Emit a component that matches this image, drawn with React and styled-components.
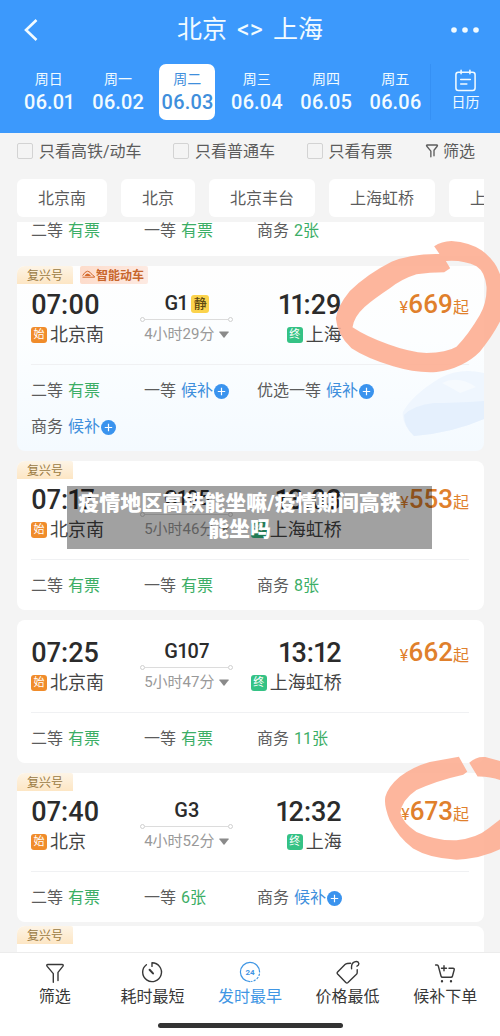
import React, { useState } from 'react';
import styled, { createGlobalStyle, css } from 'styled-components';

const GlobalStyle = createGlobalStyle`
  * {
    box-sizing: border-box;
  }

  body {
    margin: 0;
    background: #f4f4f4;
    color: #333;
    font-family: Roboto, 'Noto Sans CJK SC', sans-serif;
  }

  button {
    margin: 0;
    padding: 0;
    border: 0;
    background: none;
    color: inherit;
    font: inherit;
    cursor: pointer;
  }
`;

const Page = styled.div`
  display: flex;
  flex-direction: column;
  height: 100vh;
`;

/* header */

const Header = styled.header`
  padding-bottom: 13px;
  background: #3c99fc;
  color: #f2fbff;
`;

const TitleBar = styled.div`
  display: flex;
  align-items: center;
  justify-content: space-between;
  height: 60px;
  margin-bottom: 4px;
  padding: 0 18px;
`;

const Title = styled.h1`
  display: flex;
  gap: 10px;
  margin: 0;
  font-size: 25px;
  font-weight: 400;
  line-height: 32px;
`;

const IconButton = styled.button`
  display: flex;
  align-items: center;
  width: 34px;
`;

const DateRow = styled.div`
  display: flex;
  padding-left: 14px;
`;

const Dates = styled.div`
  flex: 1;
  display: grid;
  grid-template-columns: repeat(6, 1fr);
  justify-items: center;
  border-right: 1px solid #3590f4;
`;

const DateButton = styled.button`
  display: flex;
  flex-direction: column;
  align-items: center;
  width: 56px;
  height: 56px;
  padding-top: 6px;
  border-radius: 7px;
  font-size: 14px;
  line-height: 18px;
  ${(props) => props.$active && css`
    background: #fff;
    color: #3f8fdc;
  `}
`;

const DateNumber = styled.span`
  font-size: 20px;
  font-weight: 500;
  line-height: 28px;
  font-variant-numeric: proportional-nums;
`;

const CalendarButton = styled.button`
  display: flex;
  flex-direction: column;
  align-items: center;
  gap: 1px;
  width: 69px;
  padding-top: 5px;
  font-size: 14px;
  line-height: 18px;
`;

/* filters */

const FilterRow = styled.div`
  display: flex;
  align-items: center;
  justify-content: space-between;
  height: 36px;
  padding: 0 25px 2px 17px;
  color: #5c5c5c;
  font-size: 16px;
`;

const CheckLabel = styled.label`
  display: flex;
  align-items: center;
  gap: 6px;
`;

const Check = styled.input`
  appearance: none;
  width: 16px;
  height: 16px;
  margin: 2px 0 0;
  border: 1px solid #d3d3d3;
  border-radius: 2px;

  &:checked {
    background: #3c99fc;
  }
`;

const FilterButton = styled.button`
  display: flex;
  align-items: center;
  gap: 3px;
`;

const Chips = styled.div`
  display: flex;
  flex-shrink: 0;
  gap: 14px;
  margin: 10px 16px 5px 17px;
  overflow: hidden;
`;

const Chip = styled.button`
  flex: none;
  height: 38px;
  padding: 0 21px 2px;
  border-radius: 6px;
  background: #fff;
  color: #5c5c5c;
  font-size: 16px;
`;

/* train list */

const List = styled.main`
  flex: 1;
  min-height: 0;
  padding: 0 16px 0 17px;
  overflow-x: hidden;
  overflow-y: auto;
  scrollbar-width: none;
`;

const Card = styled.article`
  position: relative;
  margin-bottom: ${(props) => (props.$tight ? '4px' : '10px')};
  padding: ${(props) => (props.$tagged || props.$cut ? '0' : '17px')} 15px 0 14px;
  border-radius: ${(props) => (props.$cut ? '0' : '8px')};
  background: ${(props) => (props.$smart ? 'linear-gradient(#fefefe, #fcfeff 40%, #f4faff)' : '#fff')};
`;

const LastCard = styled(Card)`
  min-height: 60px;
`;

const Tags = styled.div`
  display: flex;
  gap: 7px;
  height: 18px;
  margin: 0 0 5px -14px;
`;

const Tag = styled.span`
  display: flex;
  align-items: center;
  gap: 1px;
  height: 18px;
  padding: 0 10px 2px;
  border-radius: 8px 2px 0 0;
  background: linear-gradient(#fdf4e6, #fde6c4);
  color: #9a7a42;
  font-size: 12px;
  ${(props) => props.$smart && css`
    padding: 0 4px 2px 2px;
    border-radius: 2px;
    background: linear-gradient(90deg, #fddccb, #fdeae2);
    color: #c8662c;
    font-weight: 700;
  `}
`;

const Trip = styled.div`
  display: grid;
  grid-template-columns: 109fr 93fr 108fr 127fr;
`;

const Stop = styled.div`
  display: flex;
  flex-direction: column;
  align-items: ${(props) => (props.$end ? 'flex-end' : 'flex-start')};
`;

const Time = styled.span`
  color: #2b2b2b;
  font-size: 27px;
  font-weight: 500;
  line-height: 32px;
  font-variant-numeric: proportional-nums;
`;

const Station = styled.span`
  display: flex;
  align-items: center;
  gap: 3px;
  color: #444;
  font-size: 18px;
  line-height: 28px;
  white-space: nowrap;
`;

const StopBadge = styled.span`
  width: 16px;
  height: 16px;
  border-radius: 3px;
  background: ${(props) => (props.$end ? '#35c285' : '#f08c2b')};
  color: #fff;
  font-size: 11px;
  line-height: 16px;
  text-align: center;
`;

const Middle = styled.div`
  display: flex;
  flex-direction: column;
  align-items: center;
`;

const TrainNo = styled.span`
  display: flex;
  align-items: center;
  gap: 4px;
  color: #2b2b2b;
  font-size: 20px;
  font-weight: 500;
  line-height: 29px;
  font-variant-numeric: proportional-nums;
`;

const Quiet = styled.span`
  width: 18px;
  height: 18px;
  border-radius: 3px;
  background: #fbd34c;
  color: #5e4a12;
  font-size: 13px;
  line-height: 18px;
  text-align: center;
`;

const Track = styled.span`
  display: flex;
  align-items: center;
  width: 100%;
  height: 3px;

  &::before,
  &::after {
    content: '';
    width: 3px;
    height: 3px;
    border: 1px solid #d0d0d0;
    border-radius: 50%;
  }
`;

const TrackLine = styled.span`
  flex: 1;
  height: 1px;
  background: #dcdcdc;
`;

const Duration = styled.button`
  display: flex;
  align-items: center;
  gap: 5px;
  color: #999;
  font-size: 15px;
  line-height: 26px;
  white-space: nowrap;
`;

const Price = styled.span`
  color: #e0802c;
  font-size: 16px;
  line-height: 30px;
  text-align: right;
  white-space: nowrap;
`;

const Amount = styled.span`
  font-size: 26px;
  font-weight: 500;
  font-variant-numeric: proportional-nums;
`;

const Seats = styled.div`
  position: relative;
  display: grid;
  grid-template-columns: 113fr 113fr 212fr;
  row-gap: 18px;
  margin-top: ${(props) => (props.$cut ? '0' : '15px')};
  padding: ${(props) => (props.$cut ? '0' : '17px')} 0 ${(props) => (props.$cut ? '16px' : '15px')};
  border-top: ${(props) => (props.$cut ? '0' : '1px solid #f0f1f3')};
  font-size: 16px;
  line-height: 18px;
  white-space: nowrap;
`;

const Seat = styled.span`
  display: flex;
  align-items: center;
  gap: 5px;
  color: #5c5c5c;
`;

const Available = styled.span`
  color: #3cae66;
`;

const Waitlist = styled.button`
  display: flex;
  align-items: center;
  gap: 1px;
  color: #3f8fdc;
`;

const PenMark = styled.svg`
  position: absolute;
  top: ${(props) => props.$top};
  right: -16px;
  z-index: 1;
  fill: #fdac90;
  fill-opacity: 0.88;
  pointer-events: none;
`;

const TrainArt = styled.svg`
  position: absolute;
  right: 0;
  bottom: 14px;
`;

const Caption = styled.p`
  position: absolute;
  top: 25px;
  left: 50px;
  right: 52px;
  z-index: 2;
  margin: 0;
  padding: 4px 27px 7px 7px;
  background: rgba(0, 0, 0, 0.37);
  color: #fff;
  font-size: 21px;
  font-weight: 900;
  line-height: 26px;
  text-align: center;
`;

/* bottom bar */

const BottomBar = styled.footer`
  position: relative;
  z-index: 3;
  flex-shrink: 0;
  padding-bottom: 8px;
  border-top: 1px solid #ececec;
  background: #fff;
`;

const Tabs = styled.nav`
  display: grid;
  grid-template-columns: repeat(5, 1fr);
  padding: 7px 6px 0;
`;

const TabButton = styled.button`
  display: flex;
  flex-direction: column;
  align-items: center;
  color: ${(props) => (props.$active ? '#3f96e4' : '#383838')};
  font-size: 16px;
  line-height: 26px;
`;

const HomeBar = styled.div`
  width: 37%;
  height: 5px;
  margin: 13px auto 0;
  border-radius: 3px;
  background: #333;
`;

const LineIcon = ({ size = 24, width = 1.4, children }) => (
  <svg
    width={size}
    height={size}
    viewBox="0 0 24 24"
    fill="none"
    stroke="currentColor"
    strokeWidth={width}
    strokeLinecap="round"
    strokeLinejoin="round"
    aria-hidden="true"
  >
    {children}
  </svg>
);

const FunnelIcon = ({ size, width }) => (
  <LineIcon size={size} width={width}>
    <path d="M10.3 22.3V13.6L4.2 6.4Q3 4.5 5 4.5H19Q21 4.5 19.8 6.4L15 12.4V20.6" />
  </LineIcon>
);

const TimerIcon = () => (
  <LineIcon>
    <path d="M12 6.4V2.8A9.4 9.4 0 1 1 6.4 4.7" />
    <path d="M9.6 9.8L13 13.4" strokeWidth="2" />
  </LineIcon>
);

const DayIcon = () => (
  <LineIcon width={1.2}>
    <path d="M12 21.6A9.6 9.6 0 1 1 21.6 12" />
    <path d="M21.4 14.2A9.6 9.6 0 0 1 13.6 21.5" strokeDasharray="1.4 2.2" />
    <text x="12" y="15" textAnchor="middle" fontSize="8" fontWeight="700" fill="currentColor" stroke="none">24</text>
  </LineIcon>
);

const PriceTagIcon = () => (
  <LineIcon>
    <path d="M14.6 3.2L11.2 3.5Q10 3.6 9 4.6L1.6 12Q.7 13 1.6 14L9.8 22.4Q10.9 23.4 12 22.4L20.2 14.6Q21.2 13.6 21.2 12.4V9.6" />
    <path d="M15.6 8.8Q15 3 18.6 1.8Q22 .8 22.8 3.4Q23 5.4 21 6.2" />
  </LineIcon>
);

const CartIcon = () => (
  <LineIcon>
    <path d="M2.6 5H4.2Q5 5 5.3 6L8 16Q8.3 17.3 9.6 17.3H18Q19.2 17.3 19.5 16L21.2 9.8Q21.6 8.2 20 8.2H16" />
    <path d="M11 5.8V10.8M8.5 8.3H13.5" />
    <path d="M9 21.2V21.3M18 21.2V21.3" strokeWidth="2.4" />
  </LineIcon>
);

const PlusIcon = () => (
  <svg width="15" height="15" viewBox="0 0 15 15" aria-hidden="true">
    <circle cx="7.5" cy="7.5" r="7.5" fill="#3a93ee" />
    <path d="M7.5 3.8V11.2M3.8 7.5H11.2" stroke="#fff" strokeWidth="1.2" />
  </svg>
);

const SmartIcon = () => (
  <svg width="13" height="8" viewBox="0 0 13 8" fill="none" stroke="#d4692a" aria-hidden="true">
    <path d="M.5 7.2H12.6Q12.6 6 10.6 5.2Q8 1.4 5.6 1.2Q3 1.4.6 5.6" />
    <path d="M2.6 6Q3.6 3.4 5.6 3.4Q7.6 3.6 9 6Z" fill="#d4692a" stroke="none" />
  </svg>
);

const trains = [
  {
    no: 'G1', quiet: true, smart: true, tagged: true, mark: 'wide',
    depart: '07:00', from: '北京南', arrive: '11:29', to: '上海', duration: '4小时29分', price: 669,
    seats: [['二等', '有票'], ['一等', '候补'], ['优选一等', '候补'], ['商务', '候补']],
  },
  {
    no: 'G105', tagged: true, caption: '疫情地区高铁能坐嘛/疫情期间高铁能坐吗',
    depart: '07:17', from: '北京南', arrive: '13:03', to: '上海虹桥', duration: '5小时46分', price: 553,
    seats: [['二等', '有票'], ['一等', '有票'], ['商务', '8张']],
  },
  {
    no: 'G107',
    depart: '07:25', from: '北京南', arrive: '13:12', to: '上海虹桥', duration: '5小时47分', price: 662,
    seats: [['二等', '有票'], ['一等', '有票'], ['商务', '11张']],
  },
  {
    no: 'G3', tagged: true, tight: true, mark: 'small',
    depart: '07:40', from: '北京', arrive: '12:32', to: '上海', duration: '4小时52分', price: 673,
    seats: [['二等', '有票'], ['一等', '6张'], ['商务', '候补']],
  },
];

const days = [
  ['周日', '06.01'],
  ['周一', '06.02'],
  ['周二', '06.03'],
  ['周三', '06.04'],
  ['周四', '06.05'],
  ['周五', '06.06'],
];

const stations = ['北京南', '北京', '北京丰台', '上海虹桥', '上海'];

const tabs = [
  ['筛选', FunnelIcon],
  ['耗时最短', TimerIcon],
  ['发时最早', DayIcon],
  ['价格最低', PriceTagIcon],
  ['候补下单', CartIcon],
];

const SeatList = ({ seats, cut }) => (
  <Seats $cut={cut}>
    {seats.map(([name, state]) => (
      <Seat key={name}>
        {name}
        {state === '候补' ? (
          <Waitlist type="button">{state}<PlusIcon /></Waitlist>
        ) : (
          <Available>{state}</Available>
        )}
      </Seat>
    ))}
  </Seats>
);

const WideMark = () => (
  <PenMark $top="-31px" width="167" height="140" viewBox="250 0 500 420" fillRule="evenodd" aria-hidden="true">
    <path d="M553 34Q575 19 605 18Q660 22 695 46Q735 75 748 112L760 140V240Q735 295 690 350Q640 400 560 411Q500 415 430 394Q350 370 305 340Q262 300 258 250Q262 215 300 168Q350 118 425 80Q490 55 569 57Z
      M588 78L601 100L583 112Q540 112 500 118Q455 132 420 160Q375 190 345 215Q312 245 308 277Q350 305 415 328Q480 352 530 354Q590 353 620 335Q655 300 690 240Q712 200 710 155Q705 110 680 94Q640 74 588 78Z" />
  </PenMark>
);

const SmallMark = () => (
  <PenMark $top="-23px" width="117" height="112" viewBox="400 0 350 335" aria-hidden="true">
    <path d="M627 20L652 65L640 74Q560 92 500 120Q456 150 452 188Q460 220 500 245Q560 272 620 270Q680 264 715 235L760 200V292Q700 325 620 328Q540 325 490 295Q445 260 420 210Q402 165 407 140Q415 110 450 80Q490 50 540 36Z" />
    <path d="M658 38Q680 18 706 21L760 36V94Q725 78 683 79Z" />
  </PenMark>
);

const TrainCard = ({ train }) => (
  <Card $tagged={train.tagged} $smart={train.smart} $tight={train.tight}>
    {train.smart && (
      <TrainArt width="82" height="68" viewBox="0 0 82 68" aria-hidden="true">
        <path d="M82 4Q58-2 38 9Q10 26 1 43Q-1 54 12 67Q50 64 82 50Z" fill="#eff6fe" />
        <path d="M82 32Q50 34 32 34Q12 36 2 46Q2 58 12 67Q50 64 82 50Z" fill="#e5f0fd" />
        <path d="M40 14Q56 6 74 18L58 24Q48 18 40 14Z" fill="#f6fafe" />
      </TrainArt>
    )}
    {train.tagged && (
      <Tags>
        <Tag>复兴号</Tag>
        {train.smart && <Tag $smart><SmartIcon />智能动车</Tag>}
      </Tags>
    )}
    <Trip>
      <Stop>
        <Time>{train.depart}</Time>
        <Station><StopBadge>始</StopBadge>{train.from}</Station>
      </Stop>
      <Middle>
        <TrainNo>{train.no}{train.quiet && <Quiet>静</Quiet>}</TrainNo>
        <Track><TrackLine /></Track>
        <Duration type="button">
          {train.duration}
          <svg width="10" height="7" viewBox="0 0 10 7" aria-hidden="true">
            <path d="M.6.4H9.4Q10 .6 9.6 1.2L5.5 6.4Q5 7 4.5 6.4L.4 1.2Q0 .6.6.4Z" fill="#8a8a8a" />
          </svg>
        </Duration>
      </Middle>
      <Stop $end>
        <Time>{train.arrive}</Time>
        <Station><StopBadge $end>终</StopBadge>{train.to}</Station>
      </Stop>
      <Price>¥<Amount>{train.price}</Amount>起</Price>
    </Trip>
    <SeatList seats={train.seats} />
    {train.mark === 'wide' && <WideMark />}
    {train.mark === 'small' && <SmallMark />}
    {train.caption && <Caption>{train.caption}</Caption>}
  </Card>
);

const App = () => {
  const [day, setDay] = useState('06.03');
  const [tab, setTab] = useState('发时最早');

  return (
    <Page>
      <GlobalStyle />
      <Header>
        <TitleBar>
          <IconButton type="button" aria-label="返回">
            <svg width="22" height="24" viewBox="0 0 22 24" fill="none" stroke="currentColor" strokeWidth="2.6" aria-hidden="true">
              <path d="M18.5 2L8 12L18.5 22" />
            </svg>
          </IconButton>
          <Title><span>北京</span><span>&lt;&gt;</span><span>上海</span></Title>
          <IconButton type="button" aria-label="更多">
            <svg width="34" height="8" viewBox="0 0 34 8" fill="currentColor" aria-hidden="true">
              <circle cx="6" cy="4" r="2.8" />
              <circle cx="17" cy="4" r="2.8" />
              <circle cx="28" cy="4" r="2.8" />
            </svg>
          </IconButton>
        </TitleBar>
        <DateRow>
          <Dates>
            {days.map(([name, date]) => (
              <DateButton key={date} type="button" $active={day === date} onClick={() => setDay(date)}>
                {name}
                <DateNumber>{date}</DateNumber>
              </DateButton>
            ))}
          </Dates>
          <CalendarButton type="button">
            <LineIcon size={23} width={1.6}>
              <rect x="2" y="3.4" width="20" height="19" rx="2.6" />
              <path d="M7.4 1.4V5M16.6 1.4V5M7 11H17M7 15.6H13.4" />
            </LineIcon>
            日历
          </CalendarButton>
        </DateRow>
      </Header>

      <FilterRow>
        <CheckLabel><Check type="checkbox" />只看高铁/动车</CheckLabel>
        <CheckLabel><Check type="checkbox" />只看普通车</CheckLabel>
        <CheckLabel><Check type="checkbox" />只看有票</CheckLabel>
        <FilterButton type="button"><FunnelIcon size={16} width={2} />筛选</FilterButton>
      </FilterRow>
      <Chips>
        {stations.map((name) => <Chip key={name} type="button">{name}</Chip>)}
      </Chips>

      <List>
        <Card $cut>
          <SeatList cut seats={[['二等', '有票'], ['一等', '有票'], ['商务', '2张']]} />
        </Card>
        {trains.map((train) => <TrainCard key={train.no} train={train} />)}
        <LastCard $tagged>
          <Tags><Tag>复兴号</Tag></Tags>
        </LastCard>
      </List>

      <BottomBar>
        <Tabs>
          {tabs.map(([name, Icon]) => (
            <TabButton key={name} type="button" $active={tab === name} onClick={() => setTab(name)}>
              <Icon />
              {name}
            </TabButton>
          ))}
        </Tabs>
        <HomeBar />
      </BottomBar>
    </Page>
  );
};

export default App;
